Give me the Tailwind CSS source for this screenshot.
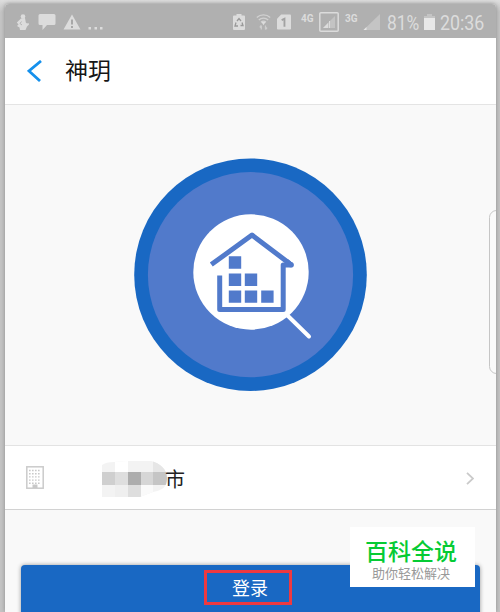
<!DOCTYPE html>
<html lang="zh-CN">
<head>
  <meta charset="UTF-8" />
  <meta name="viewport" content="width=device-width, initial-scale=1.0"/>
  <title>神玥</title>
  <script src="https://cdn.jsdelivr.net/npm/@tailwindcss/browser@4"></script>
</head>
<body class="h-[612px] overflow-hidden bg-[#c4c4c4] font-['Liberation_Sans','Noto_Sans_CJK_SC',sans-serif]">

  <div class="h-full overflow-hidden bg-linear-to-b from-[#dedede] to-[#c4c4c4] to-2% pt-1 pr-1 pl-[5px]">
    <div class="relative flex h-[608px] w-[491px] flex-col overflow-hidden rounded-t-sm bg-[#f9f9f9] shadow-[0_0_4px_#8a8a8a]">

      <!-- Barra de status -->
      <div class="flex h-[34px] shrink-0 items-center bg-[#b0b0b0] font-[Roboto,sans-serif] text-[#dcdcdc]">
        <svg class="mt-[2px] ml-[11px] h-4 w-[14px]" viewBox="0 0 14 16" fill="currentColor">
          <circle cx="7" cy="2.500" r="2.300"/>
          <path d="M5 4.500l4-.5.8 4.500 1.200 1L12.500 9l.5 1.500-2 2L9.500 16H4l-.5-2.500L1 12l1.500-1.500L.8 8.500z"/>
          <path d="M5.500 7.500l-1.500 2 2 1.500" fill="none" stroke="#b0b0b0" stroke-width=".9"/>
        </svg>
        <svg class="mt-[2px] ml-[8px] h-[18px] w-[18px]" viewBox="0 0 18 18" fill="currentColor">
          <path d="M2 1h14a1.5 1.5 0 0 1 1.5 1.5v8A1.5 1.5 0 0 1 16 12H9l-4.500 5V12H2a1.500 1.500 0 0 1-1.500-1.500v-8A1.500 1.500 0 0 1 2 1z"/>
        </svg>
        <svg class="mt-[2px] ml-[7px] h-4 w-[18px]" viewBox="0 0 18 16">
          <path d="M9 .5L17.500 15.500H.5z" fill="currentColor"/>
          <path d="M9 5.500v5M9 12v2" stroke="#a8a8a8" stroke-width="2"/>
        </svg>
        <svg class="mt-[15px] ml-[7px] h-[3px] w-[15px]" viewBox="0 0 15 3" fill="currentColor">
          <path d="M.5 0h2.500v2.500H.5zM6.500 0H9v2.500H6.500zM12 0h2.500v2.500H12z"/>
        </svg>

        <svg class="mt-[2px] ml-[130px] h-4 w-[12px]" viewBox="0 0 12 16">
          <path d="M3.500 0h5v1.500H11a1 1 0 0 1 1 1V15a1 1 0 0 1-1 1H1a1 1 0 0 1-1-1V2.500a1 1 0 0 1 1-1h2.500z" fill="currentColor"/>
          <path d="M4 7l2-2.500L8 7M9 8.500l1 3H7.500M5 12H2l1-3.500" fill="none" stroke="#999" stroke-width="1.300"/>
        </svg>
        <svg class="mt-[2px] ml-[11px] h-4 w-[15px]" viewBox="0 0 15 16" fill="none" stroke="currentColor" stroke-width="1.300">
          <path d="M.8 3.500C4.500 0 10.500 0 14.200 3.500M2.800 6c2.700-2.500 6.700-2.500 9.400 0M5 8.200c1.500-1.300 3.500-1.300 5 0" opacity=".75"/>
          <path d="M6.500 8.500h2L7.500 10z" fill="currentColor"/>
          <path d="M5.300 15.500v-4M3.800 13.500l1.500-2M9.500 11.500v4M11 13.500l-1.500 2" opacity=".65"/>
        </svg>
        <svg class="mt-[1px] ml-[6px] h-4 w-[14px]" viewBox="0 0 15 16">
          <path d="M4.500 0H14a1 1 0 0 1 1 1v14a1 1 0 0 1-1 1H1a1 1 0 0 1-1-1V4.500z" fill="currentColor"/>
          <path d="M5 6l3-1.500V13" fill="none" stroke="#a2a2a2" stroke-width="2"/>
        </svg>
        <span class="mb-[5px] ml-[10px] w-[14px] text-[10px] leading-none font-bold">4G</span>
        <svg class="mt-[2px] ml-[4px] h-5 w-5" viewBox="0 0 20 20">
          <rect x=".8" y=".8" width="18.400" height="18.400" rx="1" fill="none" stroke="currentColor" stroke-width="1.500"/>
          <path d="M16 4v12H4z" fill="#c3c3c3"/>
          <path d="M9 11v5H4zM10 9h1v7h-1z" fill="currentColor"/>
        </svg>
        <span class="mb-[5px] ml-[6px] w-[14px] text-[10px] leading-none font-bold">3G</span>
        <svg class="mt-[1px] ml-[4px] h-4 w-[17px]" viewBox="0 0 17 16">
          <path d="M17 0v16H.5z" fill="#c4c4c4"/>
          <path d="M3.500 13v3H.5z" fill="#e4e4e4"/>
        </svg>
        <span class="mt-[4px] ml-[7px] w-[33px] origin-left scale-x-[.87] text-[20px] leading-none whitespace-nowrap">81%</span>
        <svg class="mt-[2px] ml-[4px] h-4 w-[11px]" viewBox="0 0 11 16">
          <path d="M3 0h5v2h3v2.500H0V2h3z" fill="#c4c4c4"/>
          <path d="M0 4h11v12H0z" fill="#e8e8e8"/>
        </svg>
        <span class="mt-[4px] ml-[5px] origin-left scale-x-[.89] text-[20px] leading-none whitespace-nowrap">20:36</span>
      </div>

      <!-- Cabeçalho -->
      <header class="flex h-[67px] shrink-0 items-center border-b border-[#e4e4e4] bg-white">
        <svg class="ml-[22px] h-[22px] w-[15px]" viewBox="0 0 15 22" fill="none" stroke="#1590ec" stroke-width="2.800">
          <path d="M14 1L2 11l11 10"/>
        </svg>
        <h1 class="mt-[1px] ml-[23px] text-[23px] leading-none text-[#161616]">神玥</h1>
      </header>

      <!-- Logo -->
      <main class="flex h-[340px] shrink-0 items-center justify-center">
        <svg class="h-[234px] w-[234px]" viewBox="134 158 234 234">
          <circle cx="250.500" cy="274.700" r="116.300" fill="#1968c3"/>
          <circle cx="250.500" cy="274.700" r="102.600" fill="#517acb"/>
          <circle cx="251" cy="272" r="57.700" fill="#fff"/>
          <path d="M287 315l22 21.500" stroke="#fff" stroke-width="4" stroke-linecap="round"/>
          <g fill="none" stroke="#517acb" stroke-width="5" stroke-linejoin="round">
            <path d="M211.300 264.600L252 235l37.500 28.500"/>
            <path d="M219.700 275.500v34h63.500V265h8l-5-4"/>
          </g>
          <circle cx="291" cy="264.700" r="2.600" fill="#517acb"/>
          <path d="M228.800 256.300h12.400v12.400h-12.400zM228.800 273.500h12.400v12.400h-12.400zM244.800 273.500h12.400v12.400h-12.400zM228.800 290.400h12.400v12.400h-12.400zM244.800 290.400h12.400v12.400h-12.400zM261.200 290.400h12.400v12.400h-12.400z" fill="#517acb"/>
        </svg>
      </main>

      <!-- Cidade -->
      <div class="flex h-[65px] shrink-0 items-center border-t border-b border-t-[#e3e3e3] border-b-[#d2d2d2] bg-white">
        <svg class="ml-[21px] h-[23px] w-[18px]" viewBox="0 0 18 23">
          <rect x=".8" y=".8" width="16.400" height="21.400" fill="#fff" stroke="#cbcbcb" stroke-width="1.500"/>
          <path d="M3 4.500h12M3 7.700h12M3 10.900h12M3 14.100h12M3 17.300h12" stroke="#c9c9c9" stroke-width="1.400" stroke-dasharray="1.600 1.400"/>
          <path d="M6.500 18.500h5V22h-5z" fill="#c8c8c8"/>
        </svg>
        <!-- nome da cidade oculto -->
        <svg class="mt-[3px] ml-[58px] h-9 w-[65px]" viewBox="0 0 65 36">
          <clipPath id="mosaico"><path d="M0 4Q4 1 12 1L26 0h23C58 2 65 8 65 17S61 29 51 31L38 36H0z"/></clipPath>
          <g clip-path="url(#mosaico)">
            <path d="M0 0h65v36H0z" fill="#f3f3f3"/>
            <path d="M13 0h13v11H13z" fill="#fff"/>
            <path d="M51 0h14v11H51z" fill="#e6e6e6"/>
            <path d="M0 11h13v13H0z" fill="#cfcfcf"/>
            <path d="M13 11h13v13H13z" fill="#dedede"/>
            <path d="M26 11h13v13H26z" fill="#adadad"/>
            <path d="M39 11h12v13H39z" fill="#d6d6d6"/>
            <path d="M51 11h14v13H51z" fill="#c5c5c5"/>
            <path d="M13 24h13v12H13z" fill="#efefef"/>
            <path d="M26 24h13v12H26z" fill="#dedede"/>
            <path d="M39 24h12v12H39z" fill="#fafafa"/>
          </g>
        </svg>
        <span class="mt-[5px] -ml-[2px] text-[20px] leading-none text-[#222]">市</span>
        <svg class="mt-[1px] mr-[22px] ml-auto h-[13px] w-[8px]" viewBox="0 0 8 13" fill="none" stroke="#cacaca" stroke-width="1.800">
          <path d="M1 .8l6 5.700-6 5.700"/>
        </svg>
      </div>

      <!-- Botão de login -->
      <div class="mt-[55px] ml-4 flex h-[60px] w-[459px] shrink-0 justify-center rounded-t bg-[#1968c3] shadow-[0_0_4px_#999]">
        <button class="mt-[5px] -ml-[5px] flex h-[35px] w-[88px] items-center justify-center border-3 border-[#ee3940] pt-[2px] pl-[4px] text-[18px] leading-none text-white">登录</button>
      </div>

      <!-- Aba lateral -->
      <div class="absolute top-[206px] -right-[8px] h-[164px] w-[15px] rounded-[9px] border border-[#c6c6c6] bg-[#fafafa]"></div>

      <!-- Marca d'água -->
      <div class="absolute top-[523px] left-[345px] flex h-[60px] w-[125px] flex-col items-center bg-white">
        <p class="mt-[13px] -ml-[3px] text-[23px] leading-[24px] font-medium text-[#06cb34]">百科全说</p>
        <p class="mt-[3px] -ml-[3px] text-[13px] leading-[14px] text-[#999]">助你轻松解决</p>
      </div>
    </div>
  </div>

</body>
</html>
